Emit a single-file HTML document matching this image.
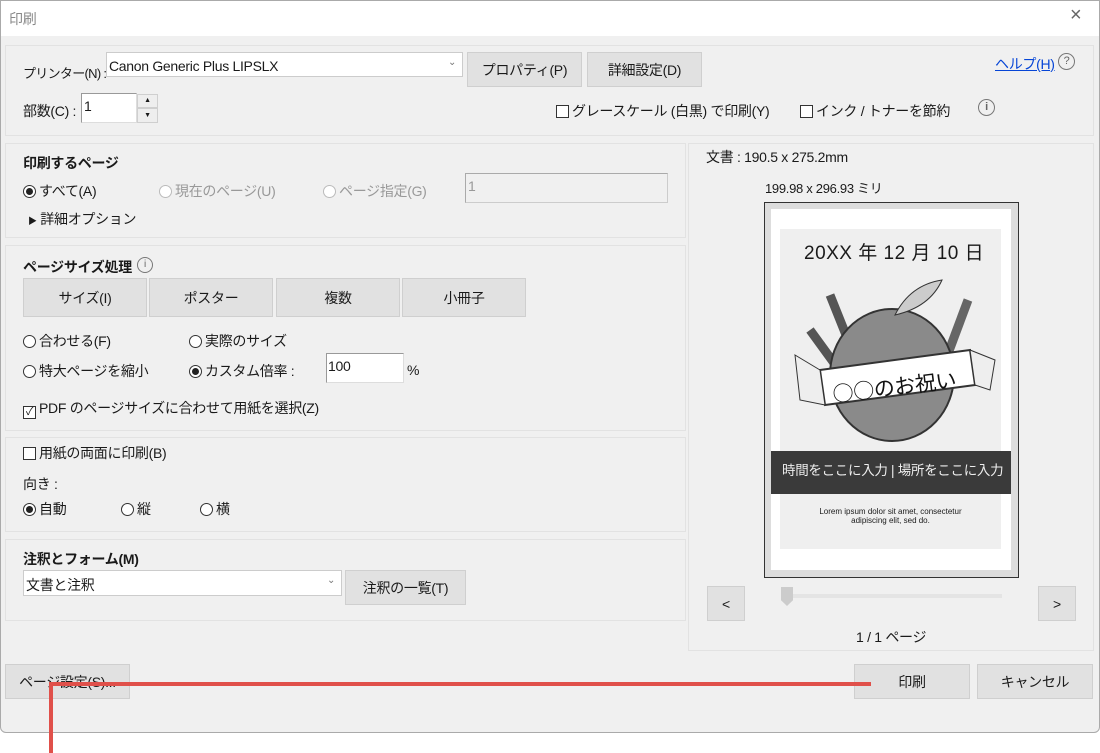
<!DOCTYPE html>
<html><head><meta charset="utf-8"><style>
*{box-sizing:border-box;margin:0;padding:0}
body{width:1100px;height:753px;background:#fff;position:relative;overflow:hidden;font-family:"Liberation Sans","Noto Sans CJK JP",sans-serif;font-size:14px;color:#1a1a1a;letter-spacing:-0.3px}
.a{position:absolute;white-space:nowrap}
#dlg{position:absolute;left:0;top:0;width:1100px;height:733px;background:#f0f0f0;border:1px solid #aaa;border-radius:0 0 6px 6px}
#title{position:absolute;left:0;top:0;width:1100px;height:36px;background:#fff;border:1px solid #aaa;border-bottom:none}
.p{position:absolute;border:1px solid #e2e2e2;background:#f0f0f0}
.btn{position:absolute;background:#e1e1e1;border:1px solid #cfcfcf;text-align:center;font-size:14px}
.inp{position:absolute;background:#fff;border:1px solid #b8b8b8}
.r{display:inline-block;width:13px;height:13px;border:1px solid #333;border-radius:50%;vertical-align:-2px;margin-right:3px;position:relative;background:#fff}
.r.on::after{content:"";position:absolute;left:2px;top:2px;width:7px;height:7px;border-radius:50%;background:#222}
.r.dis{border-color:#bbb}
.c{display:inline-block;width:13px;height:13px;border:1px solid #333;vertical-align:-2px;margin-right:3px;background:#fff;position:relative}
.g{color:#999}
</style></head><body>
<div id="dlg"></div>
<div id="title"></div>
<div class="a" style="left:9px;top:9px;color:#888">印刷</div>
<div class="a" style="left:1070px;top:4px;font-size:20px;color:#666">×</div>

<div class="p" style="left:5px;top:45px;width:1089px;height:91px"></div>
<div class="a" style="left:23px;top:63px;font-size:13px;letter-spacing:-0.7px">プリンター(N) :</div>
<div class="inp" style="left:106px;top:52px;width:357px;height:25px;border-color:#ccc"></div>
<div class="a" style="left:109px;top:58px">Canon Generic Plus LIPSLX</div>
<div class="a" style="left:448px;top:57px;font-size:10px;color:#777">⌄</div>
<div class="btn" style="left:467px;top:52px;width:115px;height:35px;line-height:35px">プロパティ(P)</div>
<div class="btn" style="left:587px;top:52px;width:115px;height:35px;line-height:35px">詳細設定(D)</div>
<div class="a" style="left:995px;top:54px;color:#0645d6;text-decoration:underline">ヘルプ(H)</div>
<div class="a" style="left:1058px;top:53px;width:17px;height:17px;border:1.5px solid #777;border-radius:50%;text-align:center;font-size:11px;line-height:14px;color:#666">?</div>
<div class="a" style="left:23px;top:101px">部数(C) :</div>
<div class="inp" style="left:81px;top:93px;width:56px;height:30px;border-color:#999 #ddd #ddd #999"></div>
<div class="a" style="left:84px;top:98px">1</div>
<div class="btn" style="left:137px;top:94px;width:21px;height:14px;font-size:7px;line-height:12px;background:#eee">▲</div>
<div class="btn" style="left:137px;top:108px;width:21px;height:15px;font-size:7px;line-height:13px;background:#eee">▼</div>
<div class="a" style="left:556px;top:101px"><span class="c"></span>グレースケール (白黒) で印刷(Y)</div>
<div class="a" style="left:800px;top:101px"><span class="c"></span>インク / トナーを節約</div>
<div class="a" style="left:978px;top:99px;width:17px;height:17px;border:1.5px solid #777;border-radius:50%;text-align:center;font-size:11px;line-height:14px;color:#666;font-weight:bold">i</div>

<div class="p" style="left:5px;top:143px;width:681px;height:95px"></div>
<div class="a" style="left:23px;top:153px;font-weight:bold">印刷するページ</div>
<div class="a" style="left:23px;top:181px"><span class="r on"></span>すべて(A)</div>
<div class="a g" style="left:159px;top:181px"><span class="r dis"></span>現在のページ(U)</div>
<div class="a g" style="left:323px;top:181px"><span class="r dis"></span>ページ指定(G)</div>
<div class="inp" style="left:465px;top:173px;width:203px;height:30px;background:#f0f0f0;border-color:#aaa #ccc #ccc #aaa"></div>
<div class="a g" style="left:468px;top:178px">1</div>
<div class="a" style="left:28px;top:209px"><span style="font-size:9px">▶</span> 詳細オプション</div>

<div class="p" style="left:5px;top:245px;width:681px;height:186px"></div>
<div class="a" style="left:23px;top:257px;font-weight:bold">ページサイズ処理</div>
<div class="a" style="left:137px;top:257px;width:16px;height:16px;border:1.3px solid #777;border-radius:50%;font-size:10px;text-align:center;line-height:13px;color:#666">i</div>
<div class="btn" style="left:23px;top:278px;width:124px;height:39px;line-height:39px">サイズ(I)</div>
<div class="btn" style="left:149px;top:278px;width:124px;height:39px;line-height:39px">ポスター</div>
<div class="btn" style="left:276px;top:278px;width:124px;height:39px;line-height:39px">複数</div>
<div class="btn" style="left:402px;top:278px;width:124px;height:39px;line-height:39px">小冊子</div>
<div class="a" style="left:23px;top:331px"><span class="r"></span>合わせる(F)</div>
<div class="a" style="left:189px;top:331px"><span class="r"></span>実際のサイズ</div>
<div class="a" style="left:23px;top:361px"><span class="r"></span>特大ページを縮小</div>
<div class="a" style="left:189px;top:361px"><span class="r on"></span>カスタム倍率 :</div>
<div class="inp" style="left:326px;top:353px;width:78px;height:30px;border-color:#999 #ddd #ddd #999"></div>
<div class="a" style="left:328px;top:358px">100</div>
<div class="a" style="left:407px;top:362px">%</div>
<div class="a" style="left:23px;top:398px"><span class="c" style="font-size:11px;line-height:11px;text-align:center">✓</span>PDF のページサイズに合わせて用紙を選択(Z)</div>

<div class="p" style="left:5px;top:437px;width:681px;height:95px"></div>
<div class="a" style="left:23px;top:443px"><span class="c"></span>用紙の両面に印刷(B)</div>
<div class="a" style="left:23px;top:474px">向き :</div>
<div class="a" style="left:23px;top:499px"><span class="r on"></span>自動</div>
<div class="a" style="left:121px;top:499px"><span class="r"></span>縦</div>
<div class="a" style="left:200px;top:499px"><span class="r"></span>横</div>

<div class="p" style="left:5px;top:539px;width:681px;height:82px"></div>
<div class="a" style="left:23px;top:549px;font-weight:bold">注釈とフォーム(M)</div>
<div class="inp" style="left:23px;top:570px;width:319px;height:26px;border-color:#ccc"></div>
<div class="a" style="left:26px;top:575px">文書と注釈</div>
<div class="a" style="left:327px;top:575px;font-size:10px;color:#777">⌄</div>
<div class="btn" style="left:345px;top:570px;width:121px;height:35px;line-height:35px">注釈の一覧(T)</div>

<div class="p" style="left:688px;top:143px;width:406px;height:508px"></div>
<div class="a" style="left:706px;top:147px">文書 : 190.5 x 275.2mm</div>
<div class="a" style="left:765px;top:178px;font-size:13px">199.98 x 296.93 ミリ</div>
<div class="a" style="left:764px;top:202px;width:255px;height:376px;border:1px solid #333;background:#ddd"></div>
<div class="a" style="left:771px;top:209px;width:240px;height:361px;background:#fff"></div>
<div class="a" style="left:780px;top:229px;width:221px;height:320px;background:#efefef"></div>
<div class="a" style="left:804px;top:238px;font-size:19px;letter-spacing:0.5px">20XX 年 12 月 10 日</div>
<svg class="a" style="left:790px;top:275px" width="210" height="175" viewBox="0 0 210 175">
<path d="M40 20 L70 95 M20 55 L60 110" stroke="#555" stroke-width="9"/>
<path d="M178 25 L150 100" stroke="#666" stroke-width="9"/>
<ellipse cx="102" cy="100" rx="62" ry="66" fill="#8a8a8a" stroke="#333" stroke-width="2"/>
<path d="M105 40 Q120 10 152 5 Q140 32 105 40Z" fill="#ccc" stroke="#333"/>
<path d="M30 95 L180 75 L185 110 L35 130Z" fill="#fff" stroke="#333" stroke-width="2"/>
<path d="M5 80 L30 95 L35 130 L10 125Z M180 75 L205 85 L200 115 L185 110Z" fill="#eee" stroke="#333"/>
<text x="42" y="120" font-size="21" fill="#111" font-family="Noto Sans CJK JP" transform="rotate(-7 100 110)">○○のお祝い</text>
</svg>
<div class="a" style="left:771px;top:451px;width:240px;height:43px;background:#3a3a3a"></div>
<div class="a" style="left:782px;top:459px;color:#eee;font-size:13.5px">時間をここに入力 | 場所をここに入力</div>
<div class="a" style="left:780px;top:507px;width:221px;text-align:center;font-size:8px;line-height:9px;letter-spacing:0">Lorem ipsum dolor sit amet, consectetur<br>adipiscing elit, sed do.</div>
<div class="btn" style="left:707px;top:586px;width:38px;height:35px;line-height:35px">&lt;</div>
<div class="btn" style="left:1038px;top:586px;width:38px;height:35px;line-height:35px">&gt;</div>
<div class="a" style="left:793px;top:594px;width:209px;height:4px;background:#e4e4e4"></div>
<div class="a" style="left:781px;top:587px;width:12px;height:19px;background:#ccc;clip-path:polygon(0 0,100% 0,100% 70%,50% 100%,0 70%)"></div>
<div class="a" style="left:856px;top:627px">1 / 1 ページ</div>

<div class="btn" style="left:5px;top:664px;width:125px;height:35px;line-height:35px">ページ設定(S)...</div>
<div class="btn" style="left:854px;top:664px;width:116px;height:35px;line-height:35px">印刷</div>
<div class="btn" style="left:977px;top:664px;width:116px;height:35px;line-height:35px">キャンセル</div>
<div class="a" style="left:49px;top:682px;width:822px;height:4px;background:#e0504a"></div>
<div class="a" style="left:49px;top:682px;width:4px;height:71px;background:#e0504a"></div>
</body></html>
